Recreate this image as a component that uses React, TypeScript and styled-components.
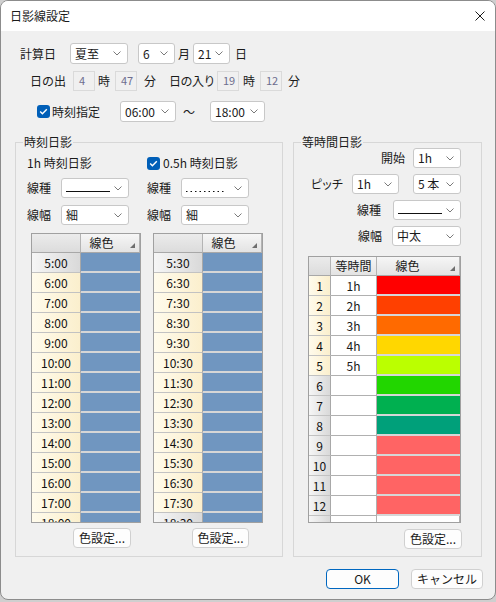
import React from 'react';
import styled, { createGlobalStyle } from 'styled-components';

const Global = createGlobalStyle`
  html, body { margin: 0; padding: 0; background: #cfcfcf; }
  body {
    font-family: "Noto Sans CJK JP", "Noto Sans", sans-serif;
    font-size: 12px;
    color: #1a1a1a;
  }
  * { box-sizing: border-box; }
`;

const Window = styled.div`
  width: 496px;
  height: 600px;
  background: #f0f0f0;
  border: 1px solid #8c8c8c;
  border-radius: 8px;
  overflow: hidden;
  display: flex;
  flex-direction: column;
`;

const TitleBar = styled.div`
  height: 30px;
  flex-shrink: 0;
  background: #ffffff;
  display: flex;
  align-items: center;
  justify-content: space-between;
  padding: 0 10px 0 9px;
  font-size: 12px;
  line-height: 16px;
`;

const Body = styled.div`
  display: flex;
  flex-direction: column;
  padding-top: 12px;
`;

const Row = styled.div<{ $pl?: number; $mt?: number; $h?: number }>`
  display: flex;
  align-items: center;
  height: ${p => p.$h ?? 21}px;
  padding-left: ${p => p.$pl ?? 0}px;
  margin-top: ${p => p.$mt ?? 0}px;
`;

const Label = styled.span<{ $w?: number; $ml?: number; $ls?: number }>`
  display: inline-block;
  flex-shrink: 0;
  white-space: nowrap;
  line-height: 16px;
  width: ${p => (p.$w ? `${p.$w}px` : 'auto')};
  margin-left: ${p => p.$ml ?? 0}px;
  letter-spacing: ${p => p.$ls ?? 0}px;
`;

const SelectBox = styled.div<{ $w: number; $h?: number; $ml?: number }>`
  display: flex;
  align-items: center;
  justify-content: space-between;
  flex-shrink: 0;
  width: ${p => p.$w}px;
  height: ${p => p.$h ?? 21}px;
  margin-left: ${p => p.$ml ?? 0}px;
  padding: 0 6px 0 4px;
  background: #ffffff;
  border: 1px solid #c8c8c8;
  border-radius: 3px;
  line-height: 16px;
  white-space: nowrap;
`;

const ReadBox = styled.div<{ $ml?: number }>`
  flex-shrink: 0;
  width: 22px;
  height: 20px;
  margin-left: ${p => p.$ml ?? 0}px;
  background: #f0f0f0;
  border: 1px solid #dadada;
  color: #6d6d8e;
  font-size: 11px;
  line-height: 14px;
  padding: 1px 0 0 5px;
`;

const CheckBox = styled.span<{ $ml?: number }>`
  flex-shrink: 0;
  display: inline-flex;
  align-items: center;
  justify-content: center;
  width: 13px;
  height: 13px;
  margin-left: ${p => p.$ml ?? 0}px;
  background: #005fb8;
  border-radius: 3px;
`;

const GroupsRow = styled.div`
  display: flex;
  gap: 10px;
  padding-left: 14px;
  margin-top: 20px;
`;

const Group = styled.div<{ $w: number }>`
  width: ${p => p.$w}px;
  height: 415px;
  border: 1px solid #d7d7d7;
  display: flex;
  flex-direction: column;
`;

const GroupTitle = styled.span`
  align-self: flex-start;
  margin: -9px 0 0 7px;
  padding: 0 1px;
  background: #f0f0f0;
  line-height: 16px;
  height: 16px;
`;

const GroupContent = styled.div<{ $pl: number }>`
  display: flex;
  flex-direction: column;
  padding-left: ${p => p.$pl}px;
`;

const Columns = styled.div`
  display: flex;
  margin-top: 5px;
`;

const Col = styled.div<{ $w: number }>`
  width: ${p => p.$w}px;
  display: flex;
  flex-direction: column;
`;

const Table = styled.div<{ $w: number; $h: number; $ml: number; $mt: number; $cols: string }>`
  width: ${p => p.$w}px;
  height: ${p => p.$h}px;
  margin-left: ${p => p.$ml}px;
  margin-top: ${p => p.$mt}px;
  border: 1px solid #a0a0a0;
  background: #ffffff;
  overflow: hidden;
  display: grid;
  grid-template-columns: ${p => p.$cols};
  grid-template-rows: 19px;
  grid-auto-rows: 20px;
  align-content: start;
  flex-shrink: 0;
`;

const HeadCell = styled.div<{ $corner?: boolean }>`
  display: flex;
  align-items: center;
  background: ${p => (p.$corner ? 'linear-gradient(#ebebeb, #dcdcdc)' : 'linear-gradient(#f6f6f6, #e3e3e3)')};
  border-right: 1px solid #b4b4b4;
  border-bottom: 1px solid #a8a8a8;
  line-height: 16px;
  &:last-child { border-right: none; }
`;

const HeadText = styled.span<{ $pr?: number }>`
  flex: 1;
  text-align: center;
  padding-right: ${p => p.$pr ?? 0}px;
  white-space: nowrap;
`;

const SortMark = styled.svg`
  align-self: flex-end;
  margin: 0 4px 4px 0;
  flex-shrink: 0;
`;

const RowHead = styled.div<{ $cream: boolean }>`
  display: flex;
  align-items: center;
  justify-content: center;
  background: ${p =>
    p.$cream
      ? 'linear-gradient(to right, #fffbec, #fbefcd)'
      : 'linear-gradient(to right, #f6f6f6, #d9d9d9)'};
  border-right: 1px solid #a8a8a8;
  border-bottom: 1px solid #c2c2c2;
  font-size: 12px;
  line-height: 16px;
  color: #111;
`;

const ColorCell = styled.div<{ $bg: string }>`
  background: ${p => p.$bg};
  border-bottom: 2px solid #d6d6d6;
`;

const ValueCell = styled.div`
  display: flex;
  align-items: center;
  justify-content: center;
  background: #ffffff;
  border-right: 1px solid #b0b0b0;
  border-bottom: 1px solid #b0b0b0;
  line-height: 16px;
`;

const Button = styled.button<{ $w: number; $ml?: number; $mt?: number; $primary?: boolean }>`
  flex-shrink: 0;
  width: ${p => p.$w}px;
  height: 20px;
  margin-left: ${p => p.$ml ?? 0}px;
  margin-top: ${p => p.$mt ?? 0}px;
  padding: 0;
  background: #fdfdfd;
  border: 1px solid ${p => (p.$primary ? '#0067c0' : '#d0d0d0')};
  border-radius: 4px;
  font-family: "Noto Sans CJK JP", "Noto Sans", sans-serif;
  font-size: 12px;
  line-height: 16px;
  color: #1a1a1a;
`;

const RightRow = styled.div<{ $mt: number }>`
  width: 153px;
  height: 20px;
  margin-top: ${p => p.$mt}px;
  display: flex;
  align-items: center;
  justify-content: flex-end;
`;

const Footer = styled.div`
  display: flex;
  justify-content: flex-end;
  gap: 12px;
  padding-right: 12px;
  margin-top: 12px;
`;

const Chevron = () => (
  <svg width="8" height="5" viewBox="0 0 8 5">
    <polyline points="0.5,0.5 4,4 7.5,0.5" fill="none" stroke="#7a7a7a" strokeWidth="1" />
  </svg>
);

const Check = () => (
  <svg width="11" height="11" viewBox="0 0 11 11">
    <polyline points="2.2,5.6 4.4,7.8 8.8,3.2" fill="none" stroke="#ffffff" strokeWidth="1.4" />
  </svg>
);

const LineSample = ({ dotted, w }: { dotted?: boolean; w: number }) => (
  <svg width={w} height="3" viewBox={`0 0 ${w} 3`}>
    <line
      x1="0"
      y1="1.5"
      x2={w}
      y2="1.5"
      stroke="#111"
      strokeWidth="1"
      strokeDasharray={dotted ? '1.5 3' : undefined}
    />
  </svg>
);

const Select = ({ w, h, ml, children }: { w: number; h?: number; ml?: number; children?: React.ReactNode }) => (
  <SelectBox $w={w} $h={h} $ml={ml}>
    <span>{children}</span>
    <Chevron />
  </SelectBox>
);

const Sort = () => (
  <SortMark width="5" height="5" viewBox="0 0 5 5">
    <polygon points="5,0 5,5 0,5" fill="#6e6e6e" />
  </SortMark>
);

type TimeRow = { t: string; cream: boolean };

const TimeTable = ({ rows, ml }: { rows: TimeRow[]; ml: number }) => (
  <Table $w={110} $h={290} $ml={ml} $mt={8} $cols="49px 59px">
    <HeadCell $corner />
    <HeadCell>
      <HeadText $pr={8}>線色</HeadText>
      <Sort />
    </HeadCell>
    {rows.map(r => (
      <React.Fragment key={r.t}>
        <RowHead $cream={r.cream}>{r.t}</RowHead>
        <ColorCell $bg="#7096c0" />
      </React.Fragment>
    ))}
  </Table>
);

const hours1: TimeRow[] = Array.from({ length: 14 }, (_, i) => ({
  t: `${5 + i}:00`,
  cream: i !== 0,
}));
const hours2: TimeRow[] = Array.from({ length: 14 }, (_, i) => ({
  t: `${5 + i}:30`,
  cream: i !== 0 && i !== 13,
}));

const eqColors = [
  '#ff0000',
  '#ff4000',
  '#ff6a00',
  '#ffd700',
  '#bbff00',
  '#22d600',
  '#00b050',
  '#00a07a',
  '#ff6464',
  '#ff6464',
  '#ff6464',
  '#ff6464',
];

export default function App() {
  return (
    <>
      <Global />
      <Window>
        <TitleBar>
          <span>日影線設定</span>
          <svg width="10" height="10" viewBox="0 0 10 10">
            <line x1="0.5" y1="0.5" x2="9.5" y2="9.5" stroke="#1a1a1a" strokeWidth="1" />
            <line x1="9.5" y1="0.5" x2="0.5" y2="9.5" stroke="#1a1a1a" strokeWidth="1" />
          </svg>
        </TitleBar>
        <Body>
          <Row $pl={19}>
            <Label $w={50}>計算日</Label>
            <Select w={58}>夏至</Select>
            <Select w={37} ml={10}>6</Select>
            <Label $w={15} $ml={3}>月</Label>
            <Select w={37}>21</Select>
            <Label $ml={5}>日</Label>
          </Row>
          <Row $pl={29} $mt={7} $h={20}>
            <Label $w={43}>日の出</Label>
            <ReadBox>4</ReadBox>
            <Label $w={17} $ml={3}>時</Label>
            <ReadBox>47</ReadBox>
            <Label $w={25} $ml={7}>分</Label>
            <Label $w={48} $ls={-0.5}>日の入り</Label>
            <ReadBox>19</ReadBox>
            <Label $w={17} $ml={4}>時</Label>
            <ReadBox>12</ReadBox>
            <Label $ml={6}>分</Label>
          </Row>
          <Row $pl={36} $mt={10}>
            <CheckBox>
              <Check />
            </CheckBox>
            <Label $w={68} $ml={2}>時刻指定</Label>
            <Select w={56}>06:00</Select>
            <Label $w={27} $ml={7}>～</Label>
            <Select w={55}>18:00</Select>
          </Row>

          <GroupsRow>
            <Group $w={268}>
              <GroupTitle>時刻日影</GroupTitle>
              <GroupContent $pl={11}>
                <Columns>
                  <Col $w={120}>
                    <Row $h={16}>
                      <Label>1h 時刻日影</Label>
                    </Row>
                    <Row $mt={7} $h={20}>
                      <Label $w={34}>線種</Label>
                      <Select w={68} h={20}>
                        <LineSample w={44} />
                      </Select>
                    </Row>
                    <Row $mt={7} $h={20}>
                      <Label $w={34}>線幅</Label>
                      <Select w={68} h={20}>細</Select>
                    </Row>
                    <TimeTable rows={hours1} ml={4} />
                    <Row $mt={5} $h={20}>
                      <Button $w={58} $ml={46}>色設定...</Button>
                    </Row>
                  </Col>
                  <Col $w={125}>
                    <Row $h={16}>
                      <CheckBox>
                        <Check />
                      </CheckBox>
                      <Label $ml={3}>0.5h 時刻日影</Label>
                    </Row>
                    <Row $mt={7} $h={20}>
                      <Label $w={34}>線種</Label>
                      <Select w={68} h={20}>
                        <LineSample w={40} dotted />
                      </Select>
                    </Row>
                    <Row $mt={7} $h={20}>
                      <Label $w={34}>線幅</Label>
                      <Select w={68} h={20}>細</Select>
                    </Row>
                    <TimeTable rows={hours2} ml={6} />
                    <Row $mt={5} $h={20}>
                      <Button $w={57} $ml={45}>色設定...</Button>
                    </Row>
                  </Col>
                </Columns>
              </GroupContent>
            </Group>

            <Group $w={189}>
              <GroupTitle>等時間日影</GroupTitle>
              <GroupContent $pl={14}>
                <RightRow $mt={-2}>
                  <Label>開始</Label>
                  <Select w={48} h={20} ml={8}>1h</Select>
                </RightRow>
                <RightRow $mt={6}>
                  <Label $ls={-1.5}>ピッチ</Label>
                  <Select w={47} h={20} ml={10}>1h</Select>
                  <Select w={48} h={20} ml={14}>5 本</Select>
                </RightRow>
                <RightRow $mt={6}>
                  <Label>線種</Label>
                  <Select w={68} h={20} ml={12}>
                    <LineSample w={44} />
                  </Select>
                </RightRow>
                <RightRow $mt={6}>
                  <Label>線幅</Label>
                  <Select w={69} h={20} ml={10}>中太</Select>
                </RightRow>
                <Table $w={153} $h={267} $ml={0} $mt={10} $cols="22px 46px 83px">
                  <HeadCell $corner />
                  <HeadCell>
                    <HeadText>等時間</HeadText>
                  </HeadCell>
                  <HeadCell>
                    <HeadText $pr={12}>線色</HeadText>
                    <Sort />
                  </HeadCell>
                  {eqColors.map((c, i) => (
                    <React.Fragment key={i}>
                      <RowHead $cream={i < 5}>{i + 1}</RowHead>
                      <ValueCell>{i < 5 ? `${i + 1}h` : ''}</ValueCell>
                      <ColorCell $bg={c} />
                    </React.Fragment>
                  ))}
                  <RowHead $cream={false} />
                  <ValueCell />
                  <ValueCell />
                </Table>
                <Row $mt={6} $h={20}>
                  <Button $w={58} $ml={96}>色設定...</Button>
                </Row>
              </GroupContent>
            </Group>
          </GroupsRow>

          <Footer>
            <Button $w={73} $primary>OK</Button>
            <Button $w={72}>キャンセル</Button>
          </Footer>
        </Body>
      </Window>
    </>
  );
}
